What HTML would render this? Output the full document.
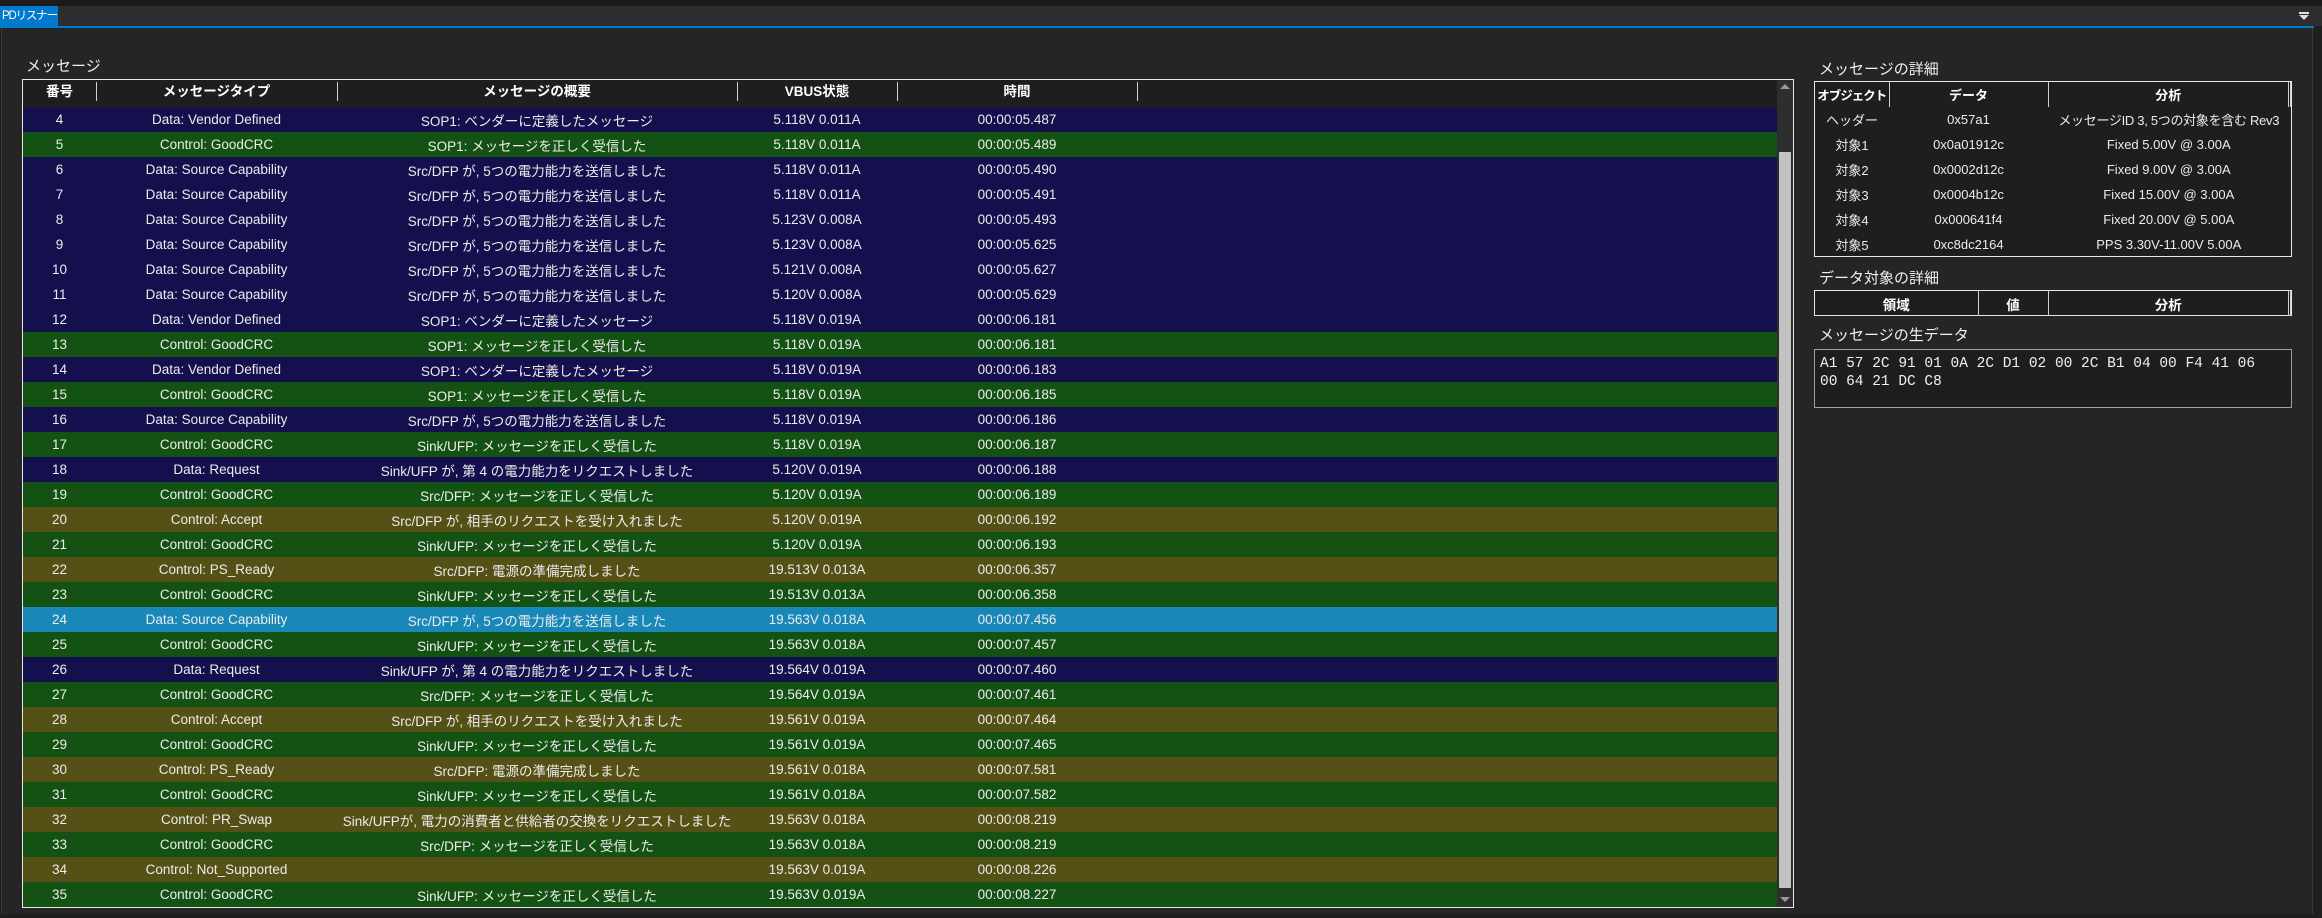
<!DOCTYPE html>
<html><head><meta charset="utf-8"><style>
*{margin:0;padding:0;box-sizing:border-box}
body{width:2322px;height:918px;background:#1f1f1f;font-family:"Liberation Sans","Noto Sans CJK JP",sans-serif;color:#ececec;font-size:13.5px;position:relative;overflow:hidden}
.a{position:absolute}
#top{left:0;top:0;width:2322px;height:6px;background:#1b1b1c}
#bar{left:0;top:6px;width:2322px;height:20px;background:#2d2d30}
#tab{left:0;top:6px;width:58px;height:20px;background:#007acc;color:#fff;font-size:11.5px;line-height:20px;padding-left:2px;letter-spacing:-1.2px;white-space:nowrap;overflow:hidden}
#line{left:0;top:26px;width:2314px;height:2px;background:#007acc}
#panel{left:1px;top:28px;width:2312px;height:886px;background:#252526;border-left:1px solid #3a3a3a;border-right:1px solid #3a3a3a}
.lbl{font-size:15px;color:#f0f0f0}
#tbl{left:22px;top:79px;width:1772px;height:829px;border:1px solid #e8e8e8;background:#1e1e1e;overflow:hidden}
table{border-collapse:collapse;table-layout:fixed}
#main td{height:25px;text-align:center;white-space:nowrap;overflow:hidden;padding:0}
#hdr{position:absolute;left:0;top:0;height:23px;width:1770px;background:#1e1e1e}
.h{position:absolute;top:0;height:23px;line-height:23px;text-align:center;font-weight:bold;color:#fff}
.hd{position:absolute;top:2px;width:1px;height:19px;background:#cfcfcf}
#rows{position:absolute;left:0;top:-1px}
.N{background:#14104e}.G{background:#145214}.O{background:#545016}.B{background:#1888b8}
#sb{left:1777px;top:80px;width:16px;height:827px;background:#2e2e2e}
#thumb{left:1779px;top:152px;width:12px;height:736px;background:#c2c2c2}
.box{border:1px solid #e8e8e8;background:#1e1e1e}
.rt td{height:25px;text-align:center;white-space:nowrap;overflow:hidden}
</style></head><body>
<div class="a" id="top"></div><div class="a" id="bar"></div>
<div class="a" id="tab">PDリスナー</div>
<div class="a" style="left:2299px;top:12px;width:10px;height:2px;background:#ddd"></div>
<div class="a" style="left:2299px;top:15px;width:0;height:0;border-left:5px solid transparent;border-right:5px solid transparent;border-top:5px solid #ddd"></div>
<div class="a" id="line"></div>
<div class="a" id="panel"></div>
<div class="a lbl" style="left:26px;top:55px">メッセージ</div>
<div class="a" id="tbl">
<div id="rows"><table id="main" style="width:1755px">
<colgroup><col style="width:73px"><col style="width:241px"><col style="width:400px"><col style="width:160px"><col style="width:240px"><col></colgroup>
<tr style="height:0"><td style="height:0"></td><td style="height:0"></td><td style="height:0"></td><td style="height:0"></td><td style="height:0"></td><td style="height:0"></td></tr>
<tr class="G" style="height:3px"><td colspan="6" style="height:3px"></td></tr>
<tr style="height:25px"><td colspan="6" style="height:25px;background:#1e1e1e"></td></tr>
<tr class="N"><td>4</td><td>Data: Vendor Defined</td><td>SOP1: ベンダーに定義したメッセージ</td><td>5.118V 0.011A</td><td>00:00:05.487</td><td></td></tr>
<tr class="G"><td>5</td><td>Control: GoodCRC</td><td>SOP1: メッセージを正しく受信した</td><td>5.118V 0.011A</td><td>00:00:05.489</td><td></td></tr>
<tr class="N"><td>6</td><td>Data: Source Capability</td><td>Src/DFP が, 5つの電力能力を送信しました</td><td>5.118V 0.011A</td><td>00:00:05.490</td><td></td></tr>
<tr class="N"><td>7</td><td>Data: Source Capability</td><td>Src/DFP が, 5つの電力能力を送信しました</td><td>5.118V 0.011A</td><td>00:00:05.491</td><td></td></tr>
<tr class="N"><td>8</td><td>Data: Source Capability</td><td>Src/DFP が, 5つの電力能力を送信しました</td><td>5.123V 0.008A</td><td>00:00:05.493</td><td></td></tr>
<tr class="N"><td>9</td><td>Data: Source Capability</td><td>Src/DFP が, 5つの電力能力を送信しました</td><td>5.123V 0.008A</td><td>00:00:05.625</td><td></td></tr>
<tr class="N"><td>10</td><td>Data: Source Capability</td><td>Src/DFP が, 5つの電力能力を送信しました</td><td>5.121V 0.008A</td><td>00:00:05.627</td><td></td></tr>
<tr class="N"><td>11</td><td>Data: Source Capability</td><td>Src/DFP が, 5つの電力能力を送信しました</td><td>5.120V 0.008A</td><td>00:00:05.629</td><td></td></tr>
<tr class="N"><td>12</td><td>Data: Vendor Defined</td><td>SOP1: ベンダーに定義したメッセージ</td><td>5.118V 0.019A</td><td>00:00:06.181</td><td></td></tr>
<tr class="G"><td>13</td><td>Control: GoodCRC</td><td>SOP1: メッセージを正しく受信した</td><td>5.118V 0.019A</td><td>00:00:06.181</td><td></td></tr>
<tr class="N"><td>14</td><td>Data: Vendor Defined</td><td>SOP1: ベンダーに定義したメッセージ</td><td>5.118V 0.019A</td><td>00:00:06.183</td><td></td></tr>
<tr class="G"><td>15</td><td>Control: GoodCRC</td><td>SOP1: メッセージを正しく受信した</td><td>5.118V 0.019A</td><td>00:00:06.185</td><td></td></tr>
<tr class="N"><td>16</td><td>Data: Source Capability</td><td>Src/DFP が, 5つの電力能力を送信しました</td><td>5.118V 0.019A</td><td>00:00:06.186</td><td></td></tr>
<tr class="G"><td>17</td><td>Control: GoodCRC</td><td>Sink/UFP: メッセージを正しく受信した</td><td>5.118V 0.019A</td><td>00:00:06.187</td><td></td></tr>
<tr class="N"><td>18</td><td>Data: Request</td><td>Sink/UFP が, 第 4 の電力能力をリクエストしました</td><td>5.120V 0.019A</td><td>00:00:06.188</td><td></td></tr>
<tr class="G"><td>19</td><td>Control: GoodCRC</td><td>Src/DFP: メッセージを正しく受信した</td><td>5.120V 0.019A</td><td>00:00:06.189</td><td></td></tr>
<tr class="O"><td>20</td><td>Control: Accept</td><td>Src/DFP が, 相手のリクエストを受け入れました</td><td>5.120V 0.019A</td><td>00:00:06.192</td><td></td></tr>
<tr class="G"><td>21</td><td>Control: GoodCRC</td><td>Sink/UFP: メッセージを正しく受信した</td><td>5.120V 0.019A</td><td>00:00:06.193</td><td></td></tr>
<tr class="O"><td>22</td><td>Control: PS_Ready</td><td>Src/DFP: 電源の準備完成しました</td><td>19.513V 0.013A</td><td>00:00:06.357</td><td></td></tr>
<tr class="G"><td>23</td><td>Control: GoodCRC</td><td>Sink/UFP: メッセージを正しく受信した</td><td>19.513V 0.013A</td><td>00:00:06.358</td><td></td></tr>
<tr class="B"><td>24</td><td>Data: Source Capability</td><td>Src/DFP が, 5つの電力能力を送信しました</td><td>19.563V 0.018A</td><td>00:00:07.456</td><td></td></tr>
<tr class="G"><td>25</td><td>Control: GoodCRC</td><td>Sink/UFP: メッセージを正しく受信した</td><td>19.563V 0.018A</td><td>00:00:07.457</td><td></td></tr>
<tr class="N"><td>26</td><td>Data: Request</td><td>Sink/UFP が, 第 4 の電力能力をリクエストしました</td><td>19.564V 0.019A</td><td>00:00:07.460</td><td></td></tr>
<tr class="G"><td>27</td><td>Control: GoodCRC</td><td>Src/DFP: メッセージを正しく受信した</td><td>19.564V 0.019A</td><td>00:00:07.461</td><td></td></tr>
<tr class="O"><td>28</td><td>Control: Accept</td><td>Src/DFP が, 相手のリクエストを受け入れました</td><td>19.561V 0.019A</td><td>00:00:07.464</td><td></td></tr>
<tr class="G"><td>29</td><td>Control: GoodCRC</td><td>Sink/UFP: メッセージを正しく受信した</td><td>19.561V 0.019A</td><td>00:00:07.465</td><td></td></tr>
<tr class="O"><td>30</td><td>Control: PS_Ready</td><td>Src/DFP: 電源の準備完成しました</td><td>19.561V 0.018A</td><td>00:00:07.581</td><td></td></tr>
<tr class="G"><td>31</td><td>Control: GoodCRC</td><td>Sink/UFP: メッセージを正しく受信した</td><td>19.561V 0.018A</td><td>00:00:07.582</td><td></td></tr>
<tr class="O"><td>32</td><td>Control: PR_Swap</td><td>Sink/UFPが, 電力の消費者と供給者の交換をリクエストしました</td><td>19.563V 0.018A</td><td>00:00:08.219</td><td></td></tr>
<tr class="G"><td>33</td><td>Control: GoodCRC</td><td>Src/DFP: メッセージを正しく受信した</td><td>19.563V 0.018A</td><td>00:00:08.219</td><td></td></tr>
<tr class="O"><td>34</td><td>Control: Not_Supported</td><td></td><td>19.563V 0.019A</td><td>00:00:08.226</td><td></td></tr>
<tr class="G"><td>35</td><td>Control: GoodCRC</td><td>Sink/UFP: メッセージを正しく受信した</td><td>19.563V 0.019A</td><td>00:00:08.227</td><td></td></tr>
</table></div>
<div id="hdr">
<div class="h" style="left:0;width:73px">番号</div><div class="hd" style="left:73px"></div>
<div class="h" style="left:73px;width:241px">メッセージタイプ</div><div class="hd" style="left:314px"></div>
<div class="h" style="left:314px;width:400px">メッセージの概要</div><div class="hd" style="left:714px"></div>
<div class="h" style="left:714px;width:160px">VBUS状態</div><div class="hd" style="left:874px"></div>
<div class="h" style="left:874px;width:240px">時間</div><div class="hd" style="left:1114px"></div>
</div>
</div>
<div class="a" id="sb"></div>
<div class="a" style="left:1780px;top:84px;width:0;height:0;border-left:5px solid transparent;border-right:5px solid transparent;border-bottom:5px solid #999"></div>
<div class="a" id="thumb"></div>
<div class="a" style="left:1780px;top:897px;width:0;height:0;border-left:5px solid transparent;border-right:5px solid transparent;border-top:5px solid #999"></div>

<div class="a lbl" style="left:1819px;top:58px">メッセージの詳細</div>
<div class="a box" style="left:1814px;top:81px;width:478px;height:176px">
<table class="rt" style="width:476px;font-size:13px">
<colgroup><col style="width:74px"><col style="width:159px"><col></colgroup>
<tr style="font-weight:bold;color:#fff"><td style="height:24px;border-right:1px solid #cfcfcf;letter-spacing:-1px;font-size:12.5px">オブジェクト</td><td style="border-right:1px solid #cfcfcf">データ</td><td style="border-right:3px double #cfcfcf">分析</td></tr>
<tr><td>ヘッダー</td><td>0x57a1</td><td style="letter-spacing:-0.3px">メッセージID 3, 5つの対象を含む Rev3</td></tr>
<tr><td>対象1</td><td>0x0a01912c</td><td>Fixed 5.00V @ 3.00A</td></tr>
<tr><td>対象2</td><td>0x0002d12c</td><td>Fixed 9.00V @ 3.00A</td></tr>
<tr><td>対象3</td><td>0x0004b12c</td><td>Fixed 15.00V @ 3.00A</td></tr>
<tr><td>対象4</td><td>0x000641f4</td><td>Fixed 20.00V @ 5.00A</td></tr>
<tr><td>対象5</td><td>0xc8dc2164</td><td>PPS 3.30V-11.00V 5.00A</td></tr>
</table></div>
<div class="a lbl" style="left:1819px;top:267px">データ対象の詳細</div>
<div class="a box" style="left:1814px;top:290px;width:478px;height:26px">
<table class="rt" style="width:476px;font-weight:bold;color:#fff">
<colgroup><col style="width:163px"><col style="width:70px"><col></colgroup>
<tr><td style="height:24px;border-right:1px solid #cfcfcf">領域</td><td style="border-right:1px solid #cfcfcf">値</td><td style="border-right:3px double #cfcfcf">分析</td></tr>
</table></div>
<div class="a lbl" style="left:1819px;top:324px">メッセージの生データ</div>
<div class="a box" style="left:1814px;top:349px;width:478px;height:59px;border-color:#a0a0a0;font-family:'Liberation Mono','DejaVu Sans Mono',monospace;font-size:14.5px;line-height:18px;padding:5px 0 0 5px;color:#f0f0f0">A1 57 2C 91 01 0A 2C D1 02 00 2C B1 04 00 F4 41 06<br>00 64 21 DC C8</div>
</body></html>
